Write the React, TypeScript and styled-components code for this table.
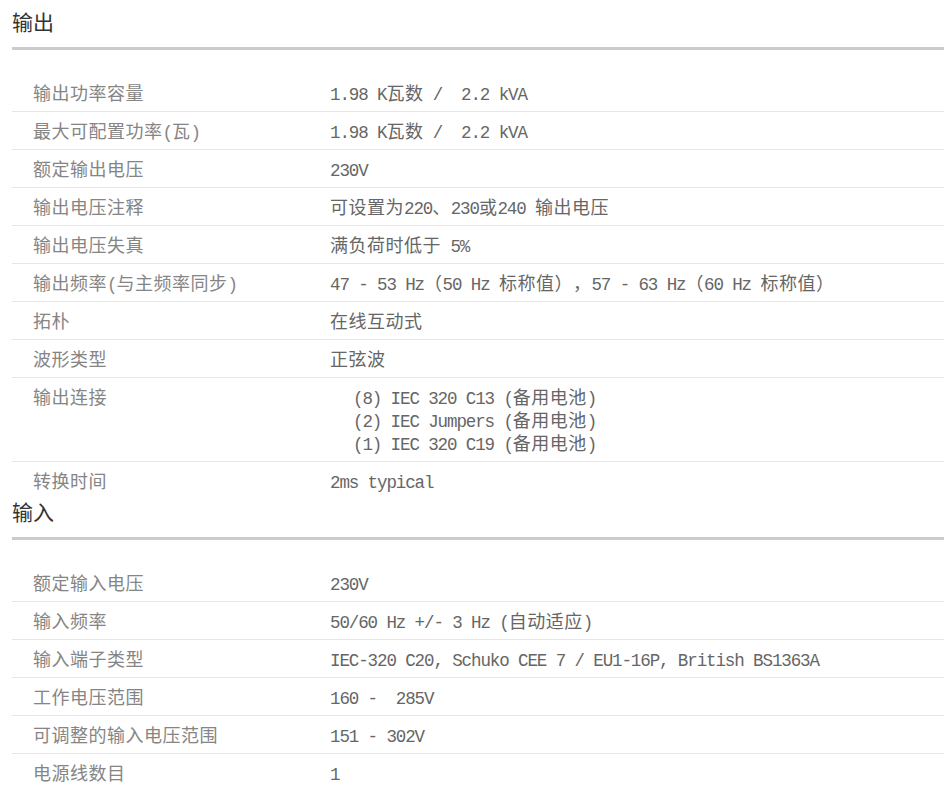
import * as React from 'react'
import styled, { createGlobalStyle } from 'styled-components'

interface Spec {
  label: string
  value: string | string[]
}

interface Group {
  title: string
  specs: Spec[]
}

const groups: Group[] = [
  {
    title: '输出',
    specs: [
      { label: '输出功率容量', value: '1.98 K瓦数 /  2.2 kVA' },
      { label: '最大可配置功率(瓦)', value: '1.98 K瓦数 /  2.2 kVA' },
      { label: '额定输出电压', value: '230V' },
      { label: '输出电压注释', value: '可设置为220、230或240 输出电压' },
      { label: '输出电压失真', value: '满负荷时低于 5%' },
      {
        label: '输出频率(与主频率同步)',
        value: '47 - 53 Hz（50 Hz 标称值），57 - 63 Hz（60 Hz 标称值）'
      },
      { label: '拓朴', value: '在线互动式' },
      { label: '波形类型', value: '正弦波' },
      {
        label: '输出连接',
        value: [
          '(8) IEC 320 C13 (备用电池)',
          '(2) IEC Jumpers (备用电池)',
          '(1) IEC 320 C19 (备用电池)'
        ]
      },
      { label: '转换时间', value: '2ms typical' }
    ]
  },
  {
    title: '输入',
    specs: [
      { label: '额定输入电压', value: '230V' },
      { label: '输入频率', value: '50/60 Hz +/- 3 Hz (自动适应)' },
      {
        label: '输入端子类型',
        value: 'IEC-320 C20, Schuko CEE 7 / EU1-16P, British BS1363A'
      },
      { label: '工作电压范围', value: '160 -  285V' },
      { label: '可调整的输入电压范围', value: '151 - 302V' },
      { label: '电源线数目', value: '1' }
    ]
  }
]

const GlobalStyle = createGlobalStyle`
  html, body {
    margin: 0;
    padding: 0;
    background: #fff;
  }
  body {
    font-family: "Noto Sans CJK SC", "Liberation Sans", sans-serif;
  }
`

const Page = styled.div`
  padding: 9px 0 0 12px;
  overflow: hidden;
`

const Section = styled.section`
  display: flex;
  flex-direction: column;
`

const SectionTitle = styled.h2`
  margin: 0;
  padding-bottom: 14px;
  border-bottom: 3px solid #cbcbcb;
  font-family: "Noto Sans CJK SC", sans-serif;
  font-size: 21px;
  font-weight: 400;
  line-height: 24px;
  color: #333;
`

const SpecTable = styled.div`
  margin-top: 24px;
  display: flex;
  flex-direction: column;
`

const Row = styled.div`
  display: grid;
  grid-template-columns: 297px 1fr;
  padding: 7px 0 7px 21px;
  border-bottom: 1px solid #e6e6e6;

  &:last-child {
    border-bottom: none;
  }
`

const Cell = styled.div<{ $tone: 'label' | 'value'; $indent?: boolean }>`
  display: flex;
  flex-direction: column;
  padding-left: ${p => (p.$indent ? '23px' : '0')};
  font-family: "Noto Sans CJK SC", sans-serif;
  font-size: 18px;
  line-height: 23px;
  letter-spacing: 0.5px;
  color: ${p => (p.$tone === 'label' ? '#858585' : '#666')};
  white-space: nowrap;
  text-spacing-trim: space-all;
`

const Line = styled.span`
  display: block;
  height: 23px;
`

const Latin = styled.span`
  font-family: "Liberation Mono", "DejaVu Sans Mono", monospace;
  font-size: 17.5px;
  letter-spacing: -1.1px;
  line-height: 1;
  white-space: pre;
`

const HAN = /([\u2E80-\u303F\u3400-\u9FFF\uFF00-\uFFEF]+)/

// CJK runs keep the wide font, everything else goes to the half-width mono
const Mixed = ({ text }: { text: string }) => (
  <>
    {text
      .split(HAN)
      .filter(part => part !== '')
      .map((part, i) =>
        HAN.test(part) ? (
          <React.Fragment key={i}>{part}</React.Fragment>
        ) : (
          <Latin key={i}>{part}</Latin>
        )
      )}
  </>
)

const SpecRow = ({ spec }: { spec: Spec }) => {
  const lines = Array.isArray(spec.value) ? spec.value : [spec.value]
  return (
    <Row>
      <Cell $tone='label'>
        <Line>
          <Mixed text={spec.label} />
        </Line>
      </Cell>
      <Cell $tone='value' $indent={lines.length > 1}>
        {lines.map(l => (
          <Line key={l}>
            <Mixed text={l} />
          </Line>
        ))}
      </Cell>
    </Row>
  )
}

export default function App() {
  return (
    <Page>
      <GlobalStyle />
      {groups.map(g => (
        <Section key={g.title}>
          <SectionTitle>{g.title}</SectionTitle>
          <SpecTable>
            {g.specs.map(s => (
              <SpecRow key={s.label} spec={s} />
            ))}
          </SpecTable>
        </Section>
      ))}
    </Page>
  )
}
